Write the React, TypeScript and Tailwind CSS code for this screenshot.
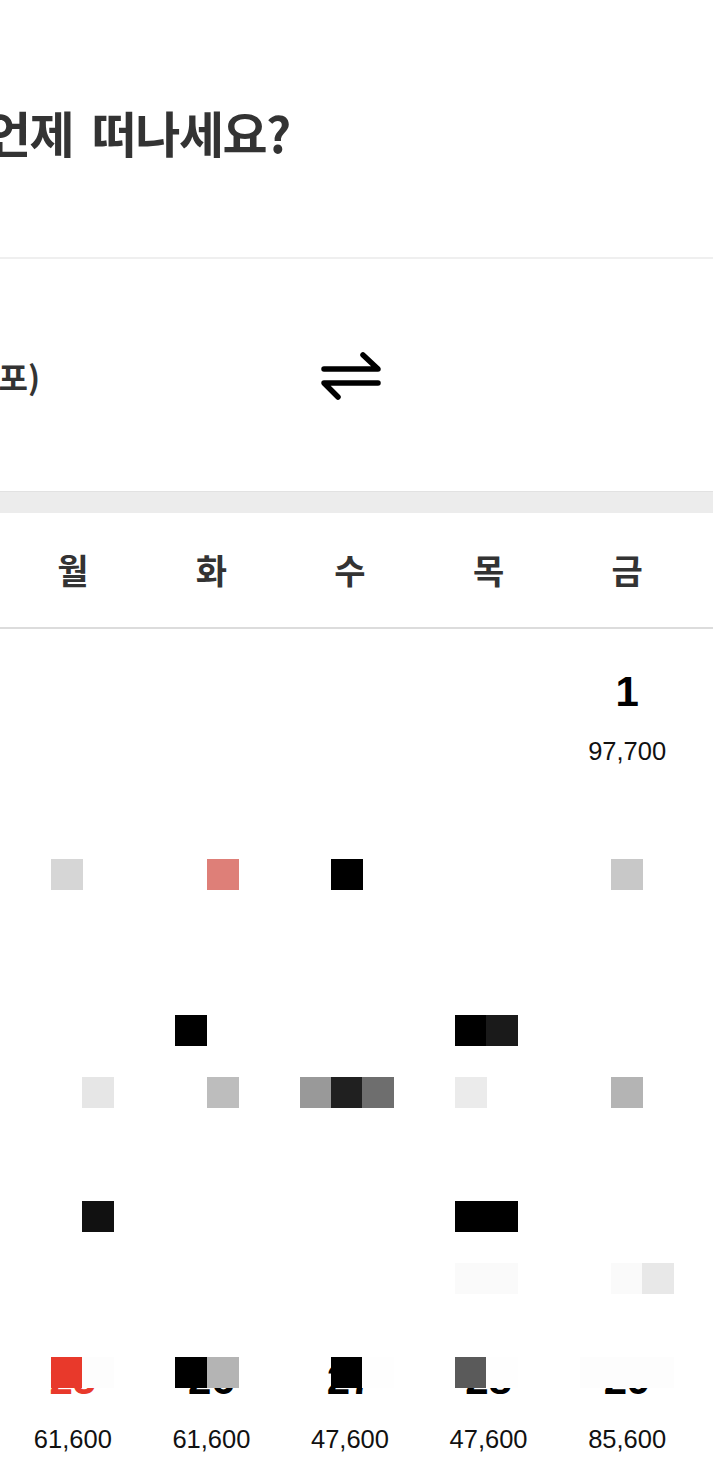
import React from 'react';

type Day = { date: number; price: string; holiday?: boolean } | null;

const weekdays = ['일', '월', '화', '수', '목', '금', '토'];

// 12월 달력: 1일이 금요일
const weeks: Day[][] = [
    [null, null, null, null, null, { date: 1, price: '97,700' }, null],
    [null, null, null, null, null, null, null],
    [null, null, null, null, null, null, null],
    [null, null, null, null, null, null, null],
    [
        null,
        { date: 25, price: '61,600', holiday: true },
        { date: 26, price: '61,600' },
        { date: 27, price: '47,600' },
        { date: 28, price: '47,600' },
        { date: 29, price: '85,600' },
        null,
    ],
];

// 화면 위에 겹쳐 보이는 깨진 픽셀 블록 (col, row, color)
const blocks: [number, number, string][] = [
    [0, 0, '#d6d6d6'],
    [5, 0, '#de7f78'],
    [9, 0, '#000000'],
    [18, 0, '#c8c8c8'],
    [4, 5, '#000000'],
    [13, 5, '#000000'],
    [14, 5, '#1a1a1a'],
    [1, 7, '#e6e6e6'],
    [5, 7, '#bdbdbd'],
    [8, 7, '#999999'],
    [9, 7, '#202020'],
    [10, 7, '#6e6e6e'],
    [13, 7, '#ebebeb'],
    [18, 7, '#b4b4b4'],
    [1, 11, '#111111'],
    [13, 11, '#000000'],
    [14, 11, '#000000'],
    [13, 13, '#fafafa'],
    [14, 13, '#fafafa'],
    [18, 13, '#fafafa'],
    [19, 13, '#e8e8e8'],
    [0, 16, '#e8392b'],
    [1, 16, '#fdfdfd'],
    [4, 16, '#000000'],
    [5, 16, '#b4b4b4'],
    [9, 16, '#000000'],
    [10, 16, '#fefefe'],
    [13, 16, '#5a5a5a'],
    [14, 16, '#fefefe'],
    [17, 16, '#fdfdfd'],
    [18, 16, '#fdfdfd'],
    [19, 16, '#fdfdfd'],
];

function SwapIcon() {
    return (
        <svg width="64" height="52" viewBox="0 0 64 52" fill="none" stroke="#000" strokeWidth="5.5" strokeLinecap="round" strokeLinejoin="round">
            <path d="M5 19 H59 L44 5" />
            <path d="M59 33 H5 L19 47" />
        </svg>
    );
}

export default function App() {
    return (
        <div className="relative min-h-[1474px] w-[713px] overflow-hidden bg-white font-['Noto_Sans_CJK_KR',sans-serif]">
            <div className="ml-[-135px] w-[970px]">
                <header className="flex h-[257px] items-center pl-[121px] pt-[6px]">
                    <h1 className="text-[49px] leading-none font-bold tracking-[-1.5px] text-[#333] [word-spacing:9px]">언제 떠나세요?</h1>
                </header>
                <div className="h-[2px] bg-[#efefef]" />

                <section className="flex h-[232px] items-center pt-[2px]">
                    <div className="w-[175px] text-right text-[32px] leading-none font-bold text-[#333]">서울(김포)</div>
                    <div className="ml-[279px]">
                        <SwapIcon />
                    </div>
                </section>

                <div className="h-[22px] border-t border-[#e2e2e2] bg-[#ececec]" />

                <div className="grid h-[116px] grid-cols-7 border-b-2 border-[#dcdcdc]">
                    {weekdays.map((d) => (
                        <div key={d} className="flex items-center justify-center text-[34px] leading-none font-bold text-[#333]">
                            {d}
                        </div>
                    ))}
                </div>

                <div className="font-['Liberation_Sans',Arial,sans-serif]">
                    {weeks.map((week, i) => (
                        <div key={i} className="grid h-[172px] grid-cols-7">
                            {week.map((day, j) => (
                                <div key={j} className="flex flex-col items-center pt-[42px]">
                                    {day && (
                                        <>
                                            <span className={`text-[42px] leading-none font-bold ${day.holiday ? 'text-[#e8392b]' : 'text-black'}`}>
                                                {day.date}
                                            </span>
                                            <span className="mt-[26px] text-[25.5px] leading-none text-[#111]">{day.price}</span>
                                        </>
                                    )}
                                </div>
                            ))}
                        </div>
                    ))}
                </div>
            </div>

            {blocks.map(([c, r, color], i) => (
                <div
                    key={i}
                    className="absolute h-[31px] w-[32px]"
                    style={{ left: Math.round(51 + 31.1 * c), top: Math.round(859 + 31.1 * r), backgroundColor: color }}
                />
            ))}
        </div>
    );
}
